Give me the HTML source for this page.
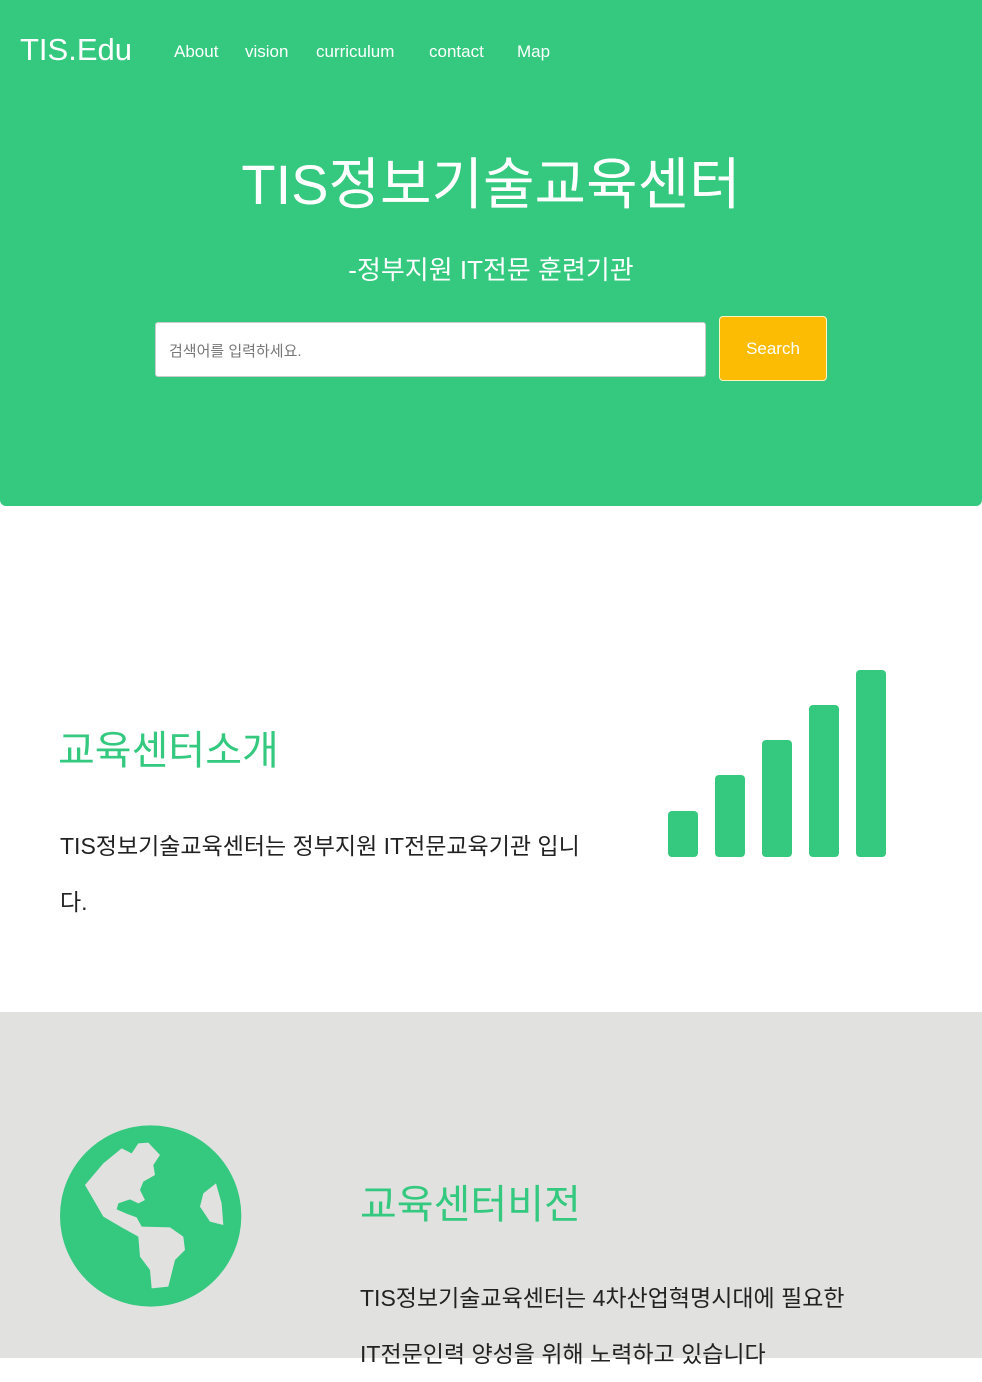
<!DOCTYPE html>
<html><head><meta charset="utf-8"><style>
*{margin:0;padding:0;box-sizing:border-box}
body{width:982px;height:1358px;overflow:hidden;background:#fff;font-family:"Liberation Sans","Noto Sans CJK KR",sans-serif;position:relative}
.hero{position:absolute;left:0;top:0;width:982px;height:506px;background:#34c97f;border-radius:0 0 6px 6px;color:#fff}
.logo{position:absolute;left:20px;top:32px;font-size:31px}
.nav span{position:absolute;top:42px;font-size:17px}
h1{position:absolute;top:140px;width:100%;text-align:center;font-size:56px;font-weight:normal}
.sub{position:absolute;top:250px;width:100%;text-align:center;font-size:26px}
.inp{position:absolute;left:155px;top:322px;width:551px;height:55px;background:#fff;border:1px solid #ccc;border-radius:3px;color:#777;font-size:15px;padding:17px 13px}
.btn{position:absolute;left:719px;top:316px;width:108px;height:65px;background:#fcbc04;border:1px solid #fff3c0;border-radius:4px;color:#fff;font-size:17px;text-align:center;line-height:63px}
.h2{position:absolute;color:#34c97f;font-size:40px}
.p{position:absolute;font-size:23px;color:#222;line-height:56px;white-space:nowrap}
.gray{position:absolute;left:0;top:1012px;width:982px;height:346px;background:#e1e1e0}
.bar{position:absolute;width:30px;background:#34c97f;border-radius:4px}
</style></head><body>
<div class="hero">
<div class="logo">TIS.Edu</div>
<div class="nav"><span style="left:174px">About</span><span style="left:245px">vision</span><span style="left:316px">curriculum</span><span style="left:429px">contact</span><span style="left:517px">Map</span></div>
<h1>TIS정보기술교육센터</h1>
<div class="sub">-정부지원 IT전문 훈련기관</div>
<div class="inp">검색어를 입력하세요.</div>
<div class="btn">Search</div>
</div>
<div class="h2" style="left:58px;top:718px">교육센터소개</div>
<div class="p" style="left:60px;top:818px">TIS정보기술교육센터는 정부지원 IT전문교육기관 입니<br>다.</div>
<div class="bar" style="left:668px;top:811px;height:46px"></div>
<div class="bar" style="left:715px;top:775px;height:82px"></div>
<div class="bar" style="left:762px;top:740px;height:117px"></div>
<div class="bar" style="left:809px;top:705px;height:152px"></div>
<div class="bar" style="left:856px;top:670px;height:187px"></div>
<div class="gray">
<svg style="position:absolute;left:0;top:0" width="982" height="346">
<g transform="translate(40,98) scale(0.3333)">
<circle cx="332" cy="318" r="272" fill="#34c97f"/>
<path fill="#e1e1e0" d="M135 225 L190 160 L245 115 L275 130 L295 100 L325 98 L360 135 L340 165 L345 195 L310 215 L300 240 L315 270 L295 280 L270 268 L235 280 L230 298 L262 312 L290 322 L305 350 L390 352 L430 380 L435 420 L405 450 L385 530 L335 535 L330 480 L300 440 L295 380 L250 355 L190 320 Z"/>
<path fill="#e1e1e0" d="M528 220 L545 280 L550 345 L510 335 L480 290 L490 250 Z"/>
</g>
</svg>
<div class="h2" style="left:360px;top:160px">교육센터비전</div>
<div class="p" style="left:360px;top:258px">TIS정보기술교육센터는 4차산업혁명시대에 필요한<br>IT전문인력 양성을 위해 노력하고 있습니다</div>
</div>
</body></html>
